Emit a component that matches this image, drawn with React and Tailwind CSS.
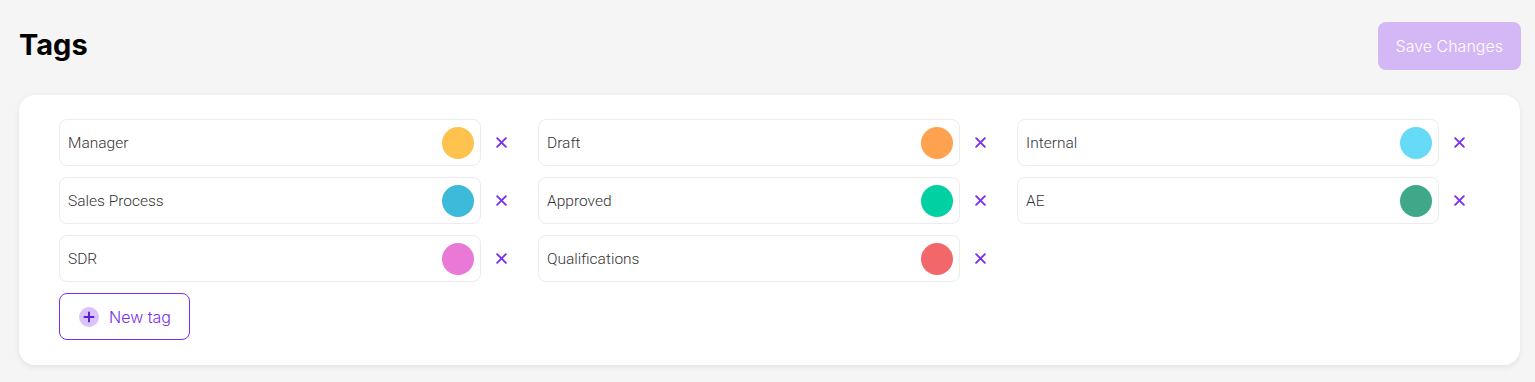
import { useState } from "react";

const initialTags = [
  { name: "Manager", color: "bg-[#ffc24f]" },
  { name: "Draft", color: "bg-[#ffa24f]" },
  { name: "Internal", color: "bg-[#65dbf7]" },
  { name: "Sales Process", color: "bg-[#3dbad9]" },
  { name: "Approved", color: "bg-[#00d0a2]" },
  { name: "AE", color: "bg-[#3fa888]" },
  { name: "SDR", color: "bg-[#e978d6]" },
  { name: "Qualifications", color: "bg-[#f2686a]" },
];

function CloseIcon() {
  return (
    <svg
      xmlns="http://www.w3.org/2000/svg"
      viewBox="0 0 24 24"
      fill="none"
      stroke="#7a2ff0"
      strokeWidth="3"
      strokeLinecap="round"
      className="w-[15px] h-[15px]"
    >
      <path d="M5 5l14 14M19 5L5 19" />
    </svg>
  );
}

function TagRow({ tag, onRemove }) {
  return (
    <div className="flex items-center">
      <div className="flex items-center justify-between flex-1 h-[47px] pl-[8px] pr-[6px] bg-white border border-[#ececec] rounded-lg">
        <span className="pt-[2px] text-[15.5px] font-light text-[#333] font-['Roboto',sans-serif]">
          {tag.name}
        </span>
        <span className={`w-8 h-8 rounded-full ${tag.color}`}></span>
      </div>
      <button
        onClick={onRemove}
        className="w-[41px] flex items-center justify-center"
      >
        <CloseIcon />
      </button>
    </div>
  );
}

export default function App() {
  const [tags, setTags] = useState(initialTags);

  return (
    <div className="min-h-[382px] bg-[#f5f5f5] font-['Inter',sans-serif]">
      <div className="flex items-start justify-between pl-[19px] pr-[14px] pt-[22px]">
        <h1 className="text-[29px] leading-none font-bold text-black pt-[8px] font-['Inter',sans-serif]">
          Tags
        </h1>
        <button className="h-12 px-[18px] rounded-lg bg-[#d3b8f5] text-white text-[16px] font-light font-['Inter',sans-serif]">
          Save Changes
        </button>
      </div>
      <div className="mx-[19px] mt-[25px] mr-[15px] bg-white rounded-2xl shadow-[0_2px_6px_rgba(0,0,0,0.08)] px-10 pt-6 pb-[25px]">
        <div className="grid grid-cols-3 gap-x-4 gap-y-[11px]">
          {tags.map((tag, i) => (
            <TagRow
              key={tag.name}
              tag={tag}
              onRemove={() => setTags(tags.filter((_, j) => j !== i))}
            />
          ))}
        </div>
        <button className="mt-[11px] h-[47px] w-[131px] flex items-center gap-[10px] pl-[19px] border border-[#7a2ff0] rounded-lg text-[#7a2ff0] text-[16px] font-light font-['Inter',sans-serif]">
          <span className="w-5 h-5 rounded-full bg-[#d9c3fb] flex items-center justify-center">
            <svg
              xmlns="http://www.w3.org/2000/svg"
              viewBox="0 0 20 20"
              fill="none"
              stroke="#5b1ed0"
              strokeWidth="2"
              strokeLinecap="round"
              className="w-5 h-5"
            >
              <path d="M10 5.5v9M5.5 10h9" />
            </svg>
          </span>
          New tag
        </button>
      </div>
    </div>
  );
}
